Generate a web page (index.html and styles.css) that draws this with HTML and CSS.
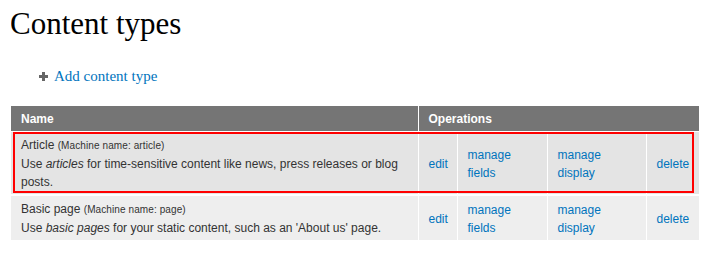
FILE: index.html
```html
<!DOCTYPE html>
<html>
<head>
  <meta charset="UTF-8">
  <title>Content types</title>
  <link rel="stylesheet" href="styles.css">
</head>

<body>
  <h1 class="page-title">Content types</h1>

  <ul class="action-links">
    <li>
      <span class="plus"></span>
      <a href="#">Add content type</a>
    </li>
  </ul>

  <div class="table-wrap">
    <table class="types">
      <colgroup>
        <col class="col-name">
        <col class="col-edit">
        <col class="col-fields">
        <col class="col-display">
        <col class="col-delete">
      </colgroup>
      <thead>
        <tr>
          <th>Name</th>
          <th colspan="4">Operations</th>
        </tr>
      </thead>
      <tbody>
        <tr class="odd">
          <td>
            <span class="type-name">Article</span> <small>(Machine name: article)</small>
            <div class="description">Use <em>articles</em> for time-sensitive content like news, press releases or blog posts.</div>
          </td>
          <td><a href="#">edit</a></td>
          <td><a href="#">manage fields</a></td>
          <td><a href="#">manage display</a></td>
          <td><a href="#">delete</a></td>
        </tr>
        <tr class="even">
          <td>
            <span class="type-name">Basic page</span> <small>(Machine name: page)</small>
            <div class="description">Use <em>basic pages</em> for your static content, such as an 'About us' page.</div>
          </td>
          <td><a href="#">edit</a></td>
          <td><a href="#">manage fields</a></td>
          <td><a href="#">manage display</a></td>
          <td><a href="#">delete</a></td>
        </tr>
      </tbody>
    </table>
    <!-- highlight box drawn over the first row -->
    <div class="highlight"></div>
  </div>
</body>

</html>
```

FILE: styles.css
```css
body {
  margin: 0 11px;
  font-family: "Liberation Sans", Arial, sans-serif;
  font-size: 12px;
  color: #333;
  background: #fff;
}
a {
  color: #0074bd;
  text-decoration: none;
}
.page-title {
  font-family: "Liberation Serif", Georgia, serif;
  font-weight: normal;
  font-size: 31px;
  line-height: 34px;
  color: #000;
  margin: 7px 0 0 -1px;
}
.action-links {
  list-style: none;
  margin: 25px 0 20px 28px;
  padding: 0;
  font-family: "Liberation Serif", Georgia, serif;
  font-size: 15px;
  line-height: 20px;
}
.action-links li {
  display: flex;
  align-items: center;
  gap: 6px;
}
.plus {
  position: relative;
  display: inline-block;
  width: 9px;
  height: 9px;
}
.plus::before,
.plus::after {
  content: "";
  position: absolute;
  background: #666;
}
.plus::before {
  left: 0;
  top: 3px;
  width: 9px;
  height: 3px;
}
.plus::after {
  left: 3px;
  top: 0;
  width: 3px;
  height: 9px;
}
.table-wrap {
  position: relative;
  width: 688px;
}
.types {
  width: 688px;
  table-layout: fixed;
  border-collapse: collapse;
}
.col-name { width: 407px; }
.col-edit { width: 39px; }
.col-fields { width: 90px; }
.col-display { width: 99px; }
.col-delete { width: 53px; }
.types th {
  background: #757575;
  color: #fff;
  font-weight: bold;
  text-align: left;
  height: 25px;
  padding: 0 10px;
  border-left: 1px solid #fff;
  border-bottom: 1px solid #fff;
}
.types th:first-child {
  border-left: none;
}
.types td {
  padding: 4px 10px 3px;
  line-height: 18px;
  vertical-align: middle;
  border-left: 1px solid #fff;
  border-bottom: 2px solid #fff;
}
.types td:first-child {
  border-left: none;
}
.types tr.odd td {
  background: #e4e4e4;
}
.types tr.even td {
  background: #eeeeee;
}
.types small {
  font-size: 10px;
  letter-spacing: 0.1px;
}
.types td a {
  display: block;
}
.highlight {
  position: absolute;
  left: 2px;
  top: 26px;
  width: 677px;
  height: 57px;
  border: 2px solid #f00;
  pointer-events: none;
}
```
